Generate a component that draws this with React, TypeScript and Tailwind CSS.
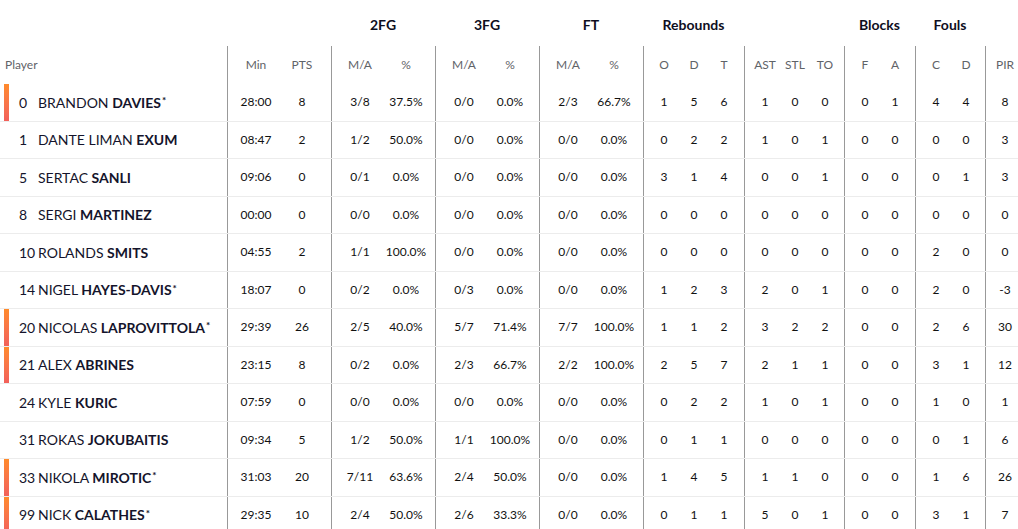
import React from "react"

interface PlayerRow {
  num: string
  first: string
  last: string
  star: boolean
  bar: boolean
  stats: string[]
}

// min, pts, 2fg m/a, %, 3fg m/a, %, ft m/a, %, O, D, T, AST, STL, TO, F, A, C, D, PIR
const rows: PlayerRow[] = [
  { num: "0", first: "BRANDON", last: "DAVIES", star: true, bar: true, stats: ["28:00", "8", "3/8", "37.5%", "0/0", "0.0%", "2/3", "66.7%", "1", "5", "6", "1", "0", "0", "0", "1", "4", "4", "8"] },
  { num: "1", first: "DANTE LIMAN", last: "EXUM", star: false, bar: false, stats: ["08:47", "2", "1/2", "50.0%", "0/0", "0.0%", "0/0", "0.0%", "0", "2", "2", "1", "0", "1", "0", "0", "0", "0", "3"] },
  { num: "5", first: "SERTAC", last: "SANLI", star: false, bar: false, stats: ["09:06", "0", "0/1", "0.0%", "0/0", "0.0%", "0/0", "0.0%", "3", "1", "4", "0", "0", "1", "0", "0", "0", "1", "3"] },
  { num: "8", first: "SERGI", last: "MARTINEZ", star: false, bar: false, stats: ["00:00", "0", "0/0", "0.0%", "0/0", "0.0%", "0/0", "0.0%", "0", "0", "0", "0", "0", "0", "0", "0", "0", "0", "0"] },
  { num: "10", first: "ROLANDS", last: "SMITS", star: false, bar: false, stats: ["04:55", "2", "1/1", "100.0%", "0/0", "0.0%", "0/0", "0.0%", "0", "0", "0", "0", "0", "0", "0", "0", "2", "0", "0"] },
  { num: "14", first: "NIGEL", last: "HAYES-DAVIS", star: true, bar: false, stats: ["18:07", "0", "0/2", "0.0%", "0/3", "0.0%", "0/0", "0.0%", "1", "2", "3", "2", "0", "1", "0", "0", "2", "0", "-3"] },
  { num: "20", first: "NICOLAS", last: "LAPROVITTOLA", star: true, bar: true, stats: ["29:39", "26", "2/5", "40.0%", "5/7", "71.4%", "7/7", "100.0%", "1", "1", "2", "3", "2", "2", "0", "0", "2", "6", "30"] },
  { num: "21", first: "ALEX", last: "ABRINES", star: false, bar: true, stats: ["23:15", "8", "0/2", "0.0%", "2/3", "66.7%", "2/2", "100.0%", "2", "5", "7", "2", "1", "1", "0", "0", "3", "1", "12"] },
  { num: "24", first: "KYLE", last: "KURIC", star: false, bar: false, stats: ["07:59", "0", "0/0", "0.0%", "0/0", "0.0%", "0/0", "0.0%", "0", "2", "2", "1", "0", "1", "0", "0", "1", "0", "1"] },
  { num: "31", first: "ROKAS", last: "JOKUBAITIS", star: false, bar: false, stats: ["09:34", "5", "1/2", "50.0%", "1/1", "100.0%", "0/0", "0.0%", "0", "1", "1", "0", "0", "0", "0", "0", "0", "1", "6"] },
  { num: "33", first: "NIKOLA", last: "MIROTIC", star: true, bar: true, stats: ["31:03", "20", "7/11", "63.6%", "2/4", "50.0%", "0/0", "0.0%", "1", "4", "5", "1", "1", "0", "0", "0", "1", "6", "26"] },
  { num: "99", first: "NICK", last: "CALATHES", star: true, bar: true, stats: ["29:35", "10", "2/4", "50.0%", "2/6", "33.3%", "0/0", "0.0%", "0", "1", "1", "5", "0", "1", "0", "0", "3", "1", "7"] },
]

// group layout: width of group, column count, column width
const groups = [
  { title: "", width: "w-[104px]", cols: 2, col: "w-[46px]" },
  { title: "2FG", width: "w-[104px]", cols: 2, col: "w-[46px]" },
  { title: "3FG", width: "w-[104px]", cols: 2, col: "w-[46px]" },
  { title: "FT", width: "w-[104px]", cols: 2, col: "w-[46px]" },
  { title: "Rebounds", width: "w-[101px]", cols: 3, col: "w-[30px]" },
  { title: "", width: "w-[100px]", cols: 3, col: "w-[30px]" },
  { title: "Blocks", width: "w-[71px]", cols: 2, col: "w-[30px]" },
  { title: "Fouls", width: "w-[70px]", cols: 2, col: "w-[30px]" },
  { title: "", width: "flex-1", cols: 1, col: "w-[28px]" },
]

const colLabels = ["Min", "PTS", "M/A", "%", "M/A", "%", "M/A", "%", "O", "D", "T", "AST", "STL", "TO", "F", "A", "C", "D", "PIR"]

function splitByGroups(values: string[]) {
  const out: string[][] = []
  let i = 0
  for (const g of groups) {
    out.push(values.slice(i, i + g.cols))
    i += g.cols
  }
  return out
}

export default function App() {
  const labelGroups = splitByGroups(colLabels)

  return (
    <div className="w-[1018px] h-[529px] overflow-hidden bg-white font-['Lato',_sans-serif]">
      {/* group titles */}
      <div className="flex h-[46px]">
        <div className="w-[227px] shrink-0" />
        {groups.map((g, i) => (
          <div key={i} className={`${g.width} shrink-0 flex items-center justify-center pt-[3px] text-[14px] font-bold text-[#0e0e1e]`}>
            {g.title}
          </div>
        ))}
      </div>

      {/* column labels */}
      <div className="flex h-[38px] text-[12px] text-[#5f6368]">
        <div className="w-[227px] shrink-0 flex items-center pl-[5px]">Player</div>
        {labelGroups.map((cells, i) => (
          <div key={i} className={`${groups[i].width} shrink-0 flex items-center border-l border-[#999] pl-[5px]`}>
            {cells.map((c, j) => (
              <div key={j} className={`${groups[i].col} shrink-0 text-center`}>{c}</div>
            ))}
          </div>
        ))}
      </div>

      {rows.map((r) => {
        const stat = splitByGroups(r.stats)
        return (
          <div key={r.num} className="flex h-[37.5px] border-b border-[#ececec] text-[#14142b]">
            <div className="w-[227px] shrink-0 flex items-stretch">
              <div className={`w-[5px] ml-[4px] ${r.bar ? "bg-gradient-to-b from-[#ff8a2a] to-[#f2605a]" : ""}`} />
              <div className="flex items-center pl-[10px] text-[14px]">
                <span className="w-[19px] shrink-0">{r.num}</span>
                <span>{r.first}&nbsp;</span>
                <span className="font-bold">{r.last}</span>
                {r.star && <span className="font-bold text-[10px] leading-none self-start mt-[11px] ml-[1px]">*</span>}
              </div>
            </div>
            {stat.map((cells, i) => (
              <div key={i} className={`${groups[i].width} shrink-0 flex items-center border-l border-[#999] pl-[5px] text-[12px] text-[#111]`}>
                {cells.map((c, j) => (
                  <div key={j} className={`${groups[i].col} shrink-0 text-center`}>{c}</div>
                ))}
              </div>
            ))}
          </div>
        )
      })}
    </div>
  )
}
